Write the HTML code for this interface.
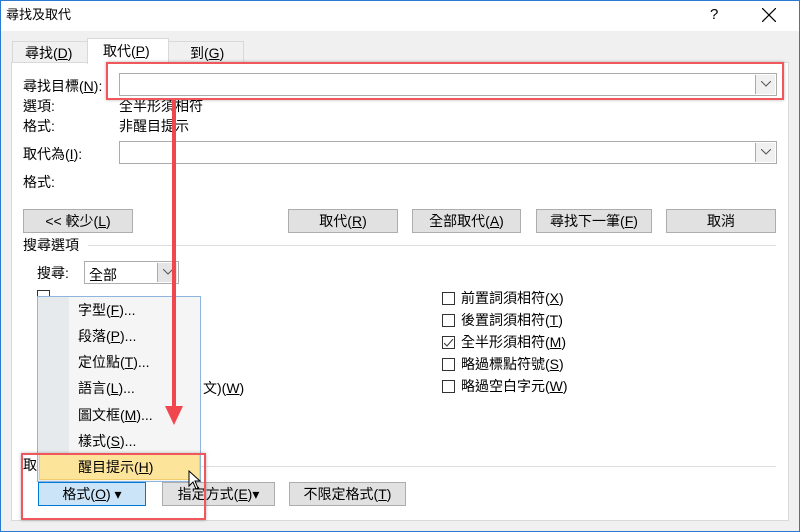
<!DOCTYPE html><html><head><meta charset="utf-8"><style>
*{margin:0;padding:0;box-sizing:border-box}
body{width:800px;height:532px;background:#f0f0f0;font-family:"Liberation Sans","Noto Sans CJK TC",sans-serif;font-size:14px;color:#000;position:relative;overflow:hidden}
.a{position:absolute;white-space:nowrap;line-height:16px}
.win{position:absolute;left:0;top:0;width:800px;height:532px;border:1px solid #2b79d0}
.btn{position:absolute;height:24px;background:#e1e1e1;border:1px solid #adadad;text-align:center;line-height:22px}
.inp{position:absolute;height:23px;background:#fff;border:1px solid #ababab}
.dd{position:absolute;right:1px;top:1px;width:20px;height:19px;background:#f0f0f0;border-left:1px solid #ababab}
.dd svg{position:absolute;left:5px;top:6px}
.cb{position:absolute;width:13px;height:13px;border:1px solid #333;background:#fff}
.mi{position:absolute;left:78px}
</style></head><body>
<div style="position:absolute;left:0;top:0;width:800px;height:31px;background:#fff"></div>
<div class="a" style="left:6px;top:7px;font-size:13px">尋找及取代</div>
<div class="a" style="left:710px;top:7px;font-size:15px">?</div>
<svg style="position:absolute;left:762px;top:8px" width="14" height="14"><path d="M0 0L14 14M14 0L0 14" stroke="#000" stroke-width="1.2"/></svg>
<div style="position:absolute;left:12px;top:41px;width:76px;height:22px;background:#f0f0f0;border:1px solid #d9d9d9;border-bottom:none"></div>
<div class="a" style="left:25px;top:45px">尋找(<u>D</u>)</div>
<div style="position:absolute;left:168px;top:41px;width:76px;height:22px;background:#f0f0f0;border:1px solid #d9d9d9;border-bottom:none"></div>
<div class="a" style="left:190px;top:45px">到(<u>G</u>)</div>
<div style="position:absolute;left:11px;top:62px;width:778px;height:459px;background:#fff;border:1px solid #d9d9d9"></div>
<div style="position:absolute;left:87px;top:38px;width:82px;height:26px;background:#fff;border:1px solid #d9d9d9;border-bottom:none"></div>
<div class="a" style="left:103px;top:43px">取代(<u>P</u>)</div>
<div class="a" style="left:23px;top:78px">尋找目標(<u>N</u>):</div>
<div class="inp" style="left:119px;top:73px;width:658px"><div class="dd"><svg width="10" height="6"><path d="M0 0L5 5L10 0" fill="none" stroke="#555"/></svg></div></div>
<div class="a" style="left:23px;top:98px">選項:</div><div class="a" style="left:119px;top:98px">全半形須相符</div>
<div class="a" style="left:23px;top:118px">格式:</div><div class="a" style="left:119px;top:118px">非醒目提示</div>
<div class="a" style="left:23px;top:146px">取代為(<u>I</u>):</div>
<div class="inp" style="left:119px;top:141px;width:658px"><div class="dd"><svg width="10" height="6"><path d="M0 0L5 5L10 0" fill="none" stroke="#555"/></svg></div></div>
<div class="a" style="left:23px;top:174px">格式:</div>
<div class="btn" style="left:23px;top:209px;width:110px">&lt;&lt; 較少(<u>L</u>)</div>
<div class="btn" style="left:288px;top:209px;width:110px">取代(<u>R</u>)</div>
<div class="btn" style="left:412px;top:209px;width:109px">全部取代(<u>A</u>)</div>
<div class="btn" style="left:536px;top:209px;width:116px">尋找下一筆(<u>F</u>)</div>
<div class="btn" style="left:666px;top:209px;width:110px">取消</div>
<div class="a" style="left:23px;top:237px">搜尋選項</div>
<div style="position:absolute;left:88px;top:245px;width:688px;height:1px;background:#ddd"></div>
<div class="a" style="left:37px;top:265px">搜尋:</div>
<div class="inp" style="left:84px;top:261px;width:95px;border-color:#adadad"><span style="position:absolute;left:4px;top:3px">全部</span><div class="dd" style="background:#e5e5e5"><svg width="10" height="6"><path d="M0 0L5 5L10 0" fill="none" stroke="#555"/></svg></div></div>
<div class="cb" style="left:37px;top:290px"></div>
<div class="a" style="left:203px;top:380px">文)(<u>W</u>)</div>
<div class="cb" style="left:442px;top:292px"></div><div class="a" style="left:461px;top:290px">前置詞須相符(<u>X</u>)</div>
<div class="cb" style="left:442px;top:314px"></div><div class="a" style="left:461px;top:312px">後置詞須相符(<u>T</u>)</div>
<div class="cb" style="left:442px;top:336px"><svg style="position:absolute;left:1px;top:2px" width="10" height="8"><path d="M0 4L3 7L9 0" fill="none" stroke="#333"/></svg></div><div class="a" style="left:461px;top:334px">全半形須相符(<u>M</u>)</div>
<div class="cb" style="left:442px;top:358px"></div><div class="a" style="left:461px;top:356px">略過標點符號(<u>S</u>)</div>
<div class="cb" style="left:442px;top:380px"></div><div class="a" style="left:461px;top:378px">略過空白字元(<u>W</u>)</div>
<div style="position:absolute;left:30px;top:466px;width:746px;height:1px;background:#ddd"></div>
<div class="a" style="left:23px;top:457px">取</div>
<div style="position:absolute;left:37px;top:296px;width:164px;height:186px;background:#f5f5f5;border:1px solid #8fb4de"></div>
<div style="position:absolute;left:38px;top:297px;width:31px;height:184px;background:#e6eaec"></div>
<div class="a mi" style="top:302px">字型(<u>F</u>)...</div>
<div class="a mi" style="top:328px">段落(<u>P</u>)...</div>
<div class="a mi" style="top:354px">定位點(<u>T</u>)...</div>
<div class="a mi" style="top:380px">語言(<u>L</u>)...</div>
<div class="a mi" style="top:407px">圖文框(<u>M</u>)...</div>
<div class="a mi" style="top:433px">樣式(<u>S</u>)...</div>
<div style="position:absolute;left:39px;top:454px;width:161px;height:26px;background:#fde49b;border:1px solid #f2cd6c"></div>
<div class="a mi" style="top:459px">醒目提示(<u>H</u>)</div>
<div class="btn" style="left:38px;top:482px;width:108px;background:#cce4f7;border-color:#0078d7">格式(<u>O</u>) ▾</div>
<div class="btn" style="left:162px;top:482px;width:113px">指定方式(<u>E</u>)▾</div>
<div class="btn" style="left:289px;top:482px;width:117px">不限定格式(<u>T</u>)</div>
<svg style="position:absolute;left:188px;top:470px" width="16" height="22"><path d="M1 1 L1 16 L5 12 L8 19 L10 18 L7 11 L12 11 Z" fill="#fff" stroke="#000"/></svg>
<div style="position:absolute;left:106px;top:62px;width:678px;height:38px;border:2px solid #f0575d;box-shadow:0 0 3px rgba(0,0,0,.3)"></div>
<div style="position:absolute;left:21px;top:453px;width:185px;height:67px;border:2px solid #f0575d;box-shadow:0 0 3px rgba(0,0,0,.3)"></div>
<div style="position:absolute;left:172px;top:100px;width:4px;height:312px;background:#f0464e"></div>
<svg style="position:absolute;left:165px;top:406px" width="18" height="20"><path d="M0 0 L18 0 L9 19 Z" fill="#f0464e"/></svg>
<div class="win"></div>
</body></html>
